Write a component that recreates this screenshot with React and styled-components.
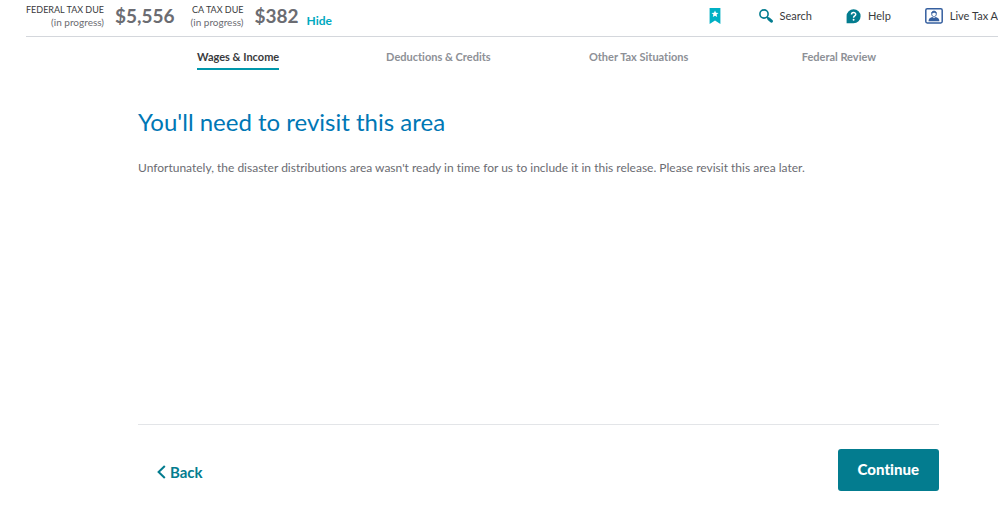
import React from 'react'
import styled, { createGlobalStyle } from 'styled-components'

const tabs = ['Wages & Income', 'Deductions & Credits', 'Other Tax Situations', 'Federal Review']

const BookmarkIcon = () => (
    <svg width="12" height="16" viewBox="0 0 12 16" aria-hidden="true">
        <path d="M0.6 0H11.4V16L6 12.6L0.6 16Z" fill="#00b0c4" />
        <path d="M6 2.4L7 4.8L9.5 5L7.6 6.6L8.2 9.1L6 7.8L3.8 9.1L4.4 6.6L2.5 5L5 4.8Z" fill="#fff" />
    </svg>
)

const SearchIcon = () => (
    <svg width="14" height="14" viewBox="0 0 14 14" fill="none" stroke="#037c8f" aria-hidden="true">
        <circle cx="5" cy="5" r="4.1" strokeWidth="1.6" />
        <path d="M8 8L9.6 9.6" strokeWidth="1.6" />
        <path d="M9.8 9.8L12.4 12.2" strokeWidth="3" strokeLinecap="round" />
    </svg>
)

const HelpIcon = () => (
    <svg width="15" height="15" viewBox="0 0 15 15" aria-hidden="true">
        <path d="M7.6 0.3A7 7 0 1 1 7.6 14.3H0.6V7.3A7 7 0 0 1 7.6 0.3Z" fill="#037c8f" />
        <path d="M5.5 5.5C5.5 2.9 9.7 2.9 9.7 5.4C9.7 7 7.6 6.9 7.6 8.7" fill="none" stroke="#fff" strokeWidth="1.5" />
        <circle cx="7.6" cy="10.8" r="0.95" fill="#fff" />
    </svg>
)

const LiveIcon = () => (
    <svg width="18" height="16" viewBox="0 0 18 16" aria-hidden="true">
        <rect x="0.8" y="0.8" width="16.4" height="14.2" rx="1.4" fill="#fff" stroke="#355f9f" strokeWidth="1.5" />
        <path d="M3.6 13.2C3.6 10.2 5.4 9.8 7.4 9L9 10.2L10.6 9C12.6 9.8 14.4 10.2 14.4 13.2Z" fill="#355f9f" />
        <path d="M6.6 5.4C6.6 2.4 11.4 2.4 11.4 5.4C11.4 10 6.6 10 6.6 5.4Z" fill="#fff" stroke="#355f9f" strokeWidth="0.9" />
        <path d="M6.4 5.6C6.2 2 11.8 2 11.6 5.6C10.6 5.5 9.6 5 9 4.4C8.4 5 7.6 5.5 6.4 5.6Z" fill="#355f9f" />
    </svg>
)

const ChevronIcon = () => (
    <svg width="9" height="14" viewBox="0 0 9 14" fill="none" aria-hidden="true">
        <path d="M7.8 1L1.6 7L7.8 13" stroke="#037c8f" strokeWidth="2" />
    </svg>
)

function TaxDue({ label, amount }) {
    return (
        <TaxDueStyled>
            <div className="label">
                <p>{label}</p>
                <small>(in progress)</small>
            </div>
            <strong>{amount}</strong>
        </TaxDueStyled>
    )
}

function App() {
    return (
        <>
            <GlobalStyle />
            <Header>
                <Summary>
                    <TaxDue label="FEDERAL TAX DUE" amount="$5,556" />
                    <TaxDue label="CA TAX DUE" amount="$382" />
                    <HideButton type="button">Hide</HideButton>
                </Summary>
                <Tools>
                    <ToolButton type="button" aria-label="Bookmark" $gap="4px"><BookmarkIcon /></ToolButton>
                    <ToolButton type="button"><SearchIcon />Search</ToolButton>
                    <ToolButton type="button"><HelpIcon />Help</ToolButton>
                    <ToolButton type="button"><LiveIcon />Live Tax A</ToolButton>
                </Tools>
            </Header>
            <Tabs>
                {tabs.map((tab, i) => (
                    <Tab key={tab} href="#" $active={i === 0}>{tab}</Tab>
                ))}
            </Tabs>
            <Content>
                <h1>You'll need to revisit this area</h1>
                <p>
                    Unfortunately, the disaster distributions area wasn't ready in time for us to include it in this release. Please revisit this area later.
                </p>
            </Content>
            <Actions>
                <BackButton type="button"><ChevronIcon />Back</BackButton>
                <ContinueButton type="button">Continue</ContinueButton>
            </Actions>
        </>
    )
}

const GlobalStyle = createGlobalStyle`
    * {
        box-sizing: border-box;
        margin: 0;
        padding: 0;
    }
    body {
        background: #fff;
        color: #393a3d;
        font-family: Lato, 'Open Sans', sans-serif;
        font-variant-ligatures: none;
    }
    button {
        border: none;
        background: none;
        font-family: inherit;
        font-variant-ligatures: none;
        cursor: pointer;
    }
    a {
        text-decoration: none;
    }
`;

const Header = styled.header`
    display: flex;
    justify-content: space-between;
    height: 37px;
    margin-left: 26px;
    border-bottom: 1px solid #d4d7dc;
    white-space: nowrap;
`;

const Summary = styled.div`
    display: flex;
    align-items: flex-start;
`;

const TaxDueStyled = styled.div`
    display: flex;
    align-items: flex-start;
    gap: 11px;
    margin-right: 16px;
    &:nth-child(2) {
        margin-right: 8px;
    }
    .label {
        padding-top: 3px;
        text-align: right;
        line-height: 13px;
    }
    p {
        font-size: 9px;
    }
    small {
        display: block;
        font-size: 10px;
        color: #6b6c72;
    }
    strong {
        padding-top: 4px;
        font-size: 19px;
        line-height: 24px;
        font-weight: 700;
        color: #6b6c72;
    }
`;

const HideButton = styled.button`
    padding-top: 13px;
    font-size: 12px;
    line-height: 16px;
    font-weight: 700;
    color: #00a9bf;
`;

const Tools = styled.div`
    display: flex;
    align-items: center;
    gap: 34px;
    height: 32px;
`;

const ToolButton = styled.button`
    display: flex;
    align-items: center;
    gap: 7px;
    margin-right: ${props => props.$gap || 0};
    font-size: 11px;
    line-height: 16px;
    color: #393a3d;
`;

const Tabs = styled.nav`
    display: grid;
    grid-template-columns: repeat(4, 1fr);
    justify-items: center;
    padding: 12px 59px 0 138px;
`;

const Tab = styled.a`
    padding-bottom: 3px;
    border-bottom: 2px solid ${props => props.$active ? '#0097ab' : 'transparent'};
    font-size: 11px;
    line-height: 16px;
    font-weight: 700;
    color: ${props => props.$active ? '#393a3d' : '#8d9096'};
`;

const Content = styled.main`
    min-height: 354px;
    padding: 36px 59px 0 138px;
    h1 {
        font-size: 24px;
        line-height: 32px;
        font-weight: 400;
        color: #0077b5;
    }
    p {
        margin-top: 20px;
        font-size: 12px;
        line-height: 20px;
        font-weight: 400;
        color: #6b6c72;
    }
`;

const Actions = styled.footer`
    display: flex;
    align-items: center;
    justify-content: space-between;
    margin: 0 59px 0 138px;
    padding: 24px 0 27px 19px;
    border-top: 1px solid #e3e5e8;
`;

const BackButton = styled.button`
    display: flex;
    align-items: center;
    gap: 4px;
    padding-top: 4px;
    font-size: 15px;
    line-height: 20px;
    font-weight: 700;
    color: #037c8f;
`;

const ContinueButton = styled.button`
    padding: 10px 20px 12px;
    border-radius: 3px;
    background: #037c8f;
    font-size: 15px;
    line-height: 20px;
    font-weight: 900;
    color: #fff;
`;

export default App
